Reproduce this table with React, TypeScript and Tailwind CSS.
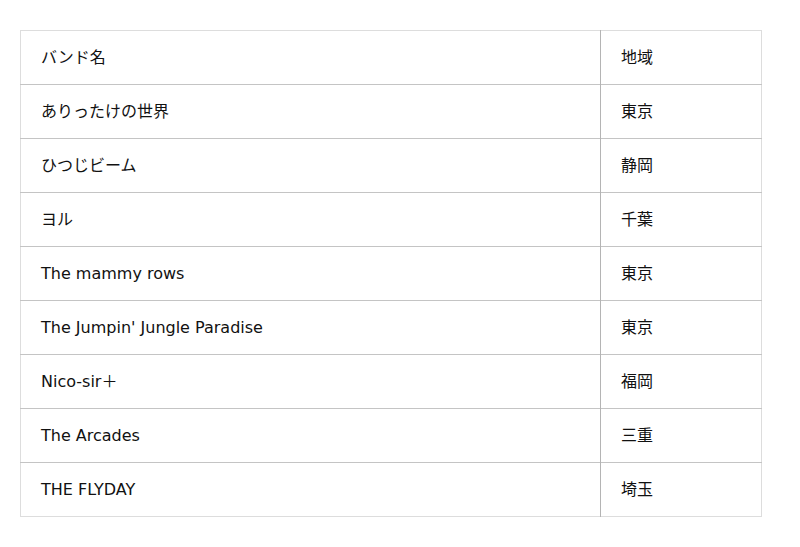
const rows: [string, string][] = [
  ['ありったけの世界', '東京'],
  ['ひつじビーム', '静岡'],
  ['ヨル', '千葉'],
  ['The mammy rows', '東京'],
  ["The Jumpin' Jungle Paradise", '東京'],
  ['Nico-sir＋', '福岡'],
  ['The Arcades', '三重'],
  ['THE FLYDAY', '埼玉'],
]

export default function App() {
  return (
    <div className="bg-white px-5 pt-[30px] pb-[30px] font-['DejaVu_Sans','Noto_Sans_CJK_JP',sans-serif] text-[16px] text-[#111]">
      <table className="w-[742px] border-collapse border border-[#dddddd]">
        <thead>
          <tr className="h-[54px]">
            <td className="px-5 font-normal text-left">バンド名</td>
            <td className="w-[161px] px-5 border-l border-[#b4b4b4]">地域</td>
          </tr>
        </thead>
        <tbody>
          {rows.map(([name, area]) => (
            <tr key={name} className="h-[54px] border-t border-[#c4c4c4]">
              <td className="px-5">{name}</td>
              <td className="px-5 border-l border-[#b4b4b4]">{area}</td>
            </tr>
          ))}
        </tbody>
      </table>
    </div>
  )
}
